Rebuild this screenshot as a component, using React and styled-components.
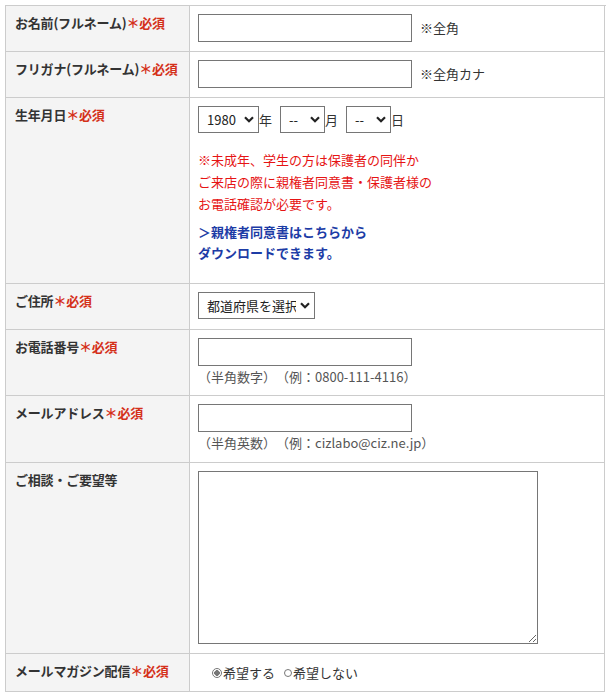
import React from "react";
import styled, { createGlobalStyle } from "styled-components";

const GlobalStyle = createGlobalStyle`
  body {
    margin: 0;
    background: #fff;
    font-family: "Noto Sans CJK JP", "Noto Sans", sans-serif;
    color: #333;
    text-spacing-trim: space-all;
  }
`;

const Page = styled.div`
  padding: 5px;
`;

const Table = styled.div`
  width: 600px;
  border-top: 1px solid #ccc;
  border-left: 1px solid #ccc;
  display: flex;
  flex-direction: column;
`;

const Row = styled.div`
  display: grid;
  grid-template-columns: 184px 415px;
  grid-template-rows: ${(p) => p.$h}px;
`;

const Head = styled.div`
  box-sizing: border-box;
  background: #f4f4f4;
  border-right: 1px solid #ccc;
  border-bottom: 1px solid #ccc;
  padding: 8px 4px 8px 9px;
  font-size: 13px;
  line-height: 18px;
  font-weight: 700;
  color: #333;
  white-space: nowrap;
  letter-spacing: -0.2px;
`;

const Required = styled.span`
  color: #d4301a;
`;

const Cell = styled.div`
  box-sizing: border-box;
  border-right: 1px solid #ccc;
  border-bottom: 1px solid #ccc;
  padding: 8px;
  font-size: 13px;
  line-height: 18px;
  display: flex;
  flex-direction: column;
  align-items: flex-start;
  justify-content: ${(p) => (p.$center ? "center" : "flex-start")};
`;

const Line = styled.div`
  display: flex;
  align-items: center;
`;

const TextInput = styled.input`
  box-sizing: border-box;
  width: 214px;
  height: 28px;
  border: 1px solid #767676;
  border-radius: 0;
  padding: 2px 4px;
  font: inherit;
  background: #fff;
`;

const Note = styled.span`
  margin-left: 8px;
  color: #333;
`;

const Hint = styled.div`
  margin-top: 2px;
  color: #555;
`;

const chevron =
  "url(\"data:image/svg+xml;utf8,<svg xmlns='http://www.w3.org/2000/svg' width='10' height='7' viewBox='0 0 10 7'><path d='M1 1.2 L5 5.2 L9 1.2' fill='none' stroke='%23222' stroke-width='2.2'/></svg>\")";

const Select = styled.select`
  box-sizing: border-box;
  appearance: none;
  width: ${(p) => p.$w}px;
  height: 27px;
  border: 1px solid #767676;
  border-radius: 0;
  padding: 0 18px 0 8px;
  font-family: "Noto Sans CJK JP", sans-serif;
  font-size: 13px;
  color: #222;
  background: #fff ${chevron} no-repeat right 4px center;
`;

const Unit = styled.span`
  margin-right: ${(p) => (p.$last ? 0 : 8)}px;
  color: #333;
`;

const Notice = styled.p`
  margin: 16px 0 0;
  color: #e61414;
  line-height: 22px;
`;

const Link = styled.a`
  display: block;
  margin-top: 6px;
  color: #1d3ca6;
  font-weight: 700;
  line-height: 21px;
  text-decoration: none;
`;

const TextArea = styled.textarea`
  box-sizing: border-box;
  width: 340px;
  height: 173px;
  border: 1px solid #767676;
  border-radius: 0;
  font: inherit;
`;

const RadioGroup = styled.div`
  display: flex;
  align-items: center;
  padding-left: 13px;
  color: #333;
`;

const RadioLabel = styled.label`
  display: flex;
  align-items: center;
  margin-right: 8px;
`;

const Dot = styled.span`
  box-sizing: border-box;
  width: ${(p) => (p.$on ? 10 : 8)}px;
  height: ${(p) => (p.$on ? 10 : 8)}px;
  margin: 0 1px;
  border-radius: 50%;
  border: 1px solid #777;
  background: ${(p) => (p.$on ? "radial-gradient(circle, #777 0 2.6px, #fff 3px)" : "#fff")};
`;

const Label = ({ text, req }) => (
  <Head>
    {text}
    {req && <Required>＊必須</Required>}
  </Head>
);

export default function App() {
  return (
    <Page>
      <GlobalStyle />
      <Table>
        <Row $h={46}>
          <Label text="お名前(フルネーム)" req />
          <Cell>
            <Line>
              <TextInput />
              <Note>※全角</Note>
            </Line>
          </Cell>
        </Row>
        <Row $h={46}>
          <Label text="フリガナ(フルネーム)" req />
          <Cell>
            <Line>
              <TextInput />
              <Note>※全角カナ</Note>
            </Line>
          </Cell>
        </Row>
        <Row $h={186}>
          <Label text="生年月日" req />
          <Cell>
            <Line>
              <Select $w={61} defaultValue="1980">
                <option>1980</option>
              </Select>
              <Unit>年</Unit>
              <Select $w={45}>
                <option>--</option>
              </Select>
              <Unit>月</Unit>
              <Select $w={45}>
                <option>--</option>
              </Select>
              <Unit $last>日</Unit>
            </Line>
            <Notice>
              ※未成年、学生の方は保護者の同伴か
              <br />
              ご来店の際に親権者同意書・保護者様の
              <br />
              お電話確認が必要です。
            </Notice>
            <Link href="#">
              ＞親権者同意書はこちらから
              <br />
              ダウンロードできます。
            </Link>
          </Cell>
        </Row>
        <Row $h={46}>
          <Label text="ご住所" req />
          <Cell>
            <Select $w={117}>
              <option>都道府県を選択</option>
            </Select>
          </Cell>
        </Row>
        <Row $h={66}>
          <Label text="お電話番号" req />
          <Cell>
            <TextInput />
            <Hint>（半角数字）（例：0800-111-4116）</Hint>
          </Cell>
        </Row>
        <Row $h={67}>
          <Label text="メールアドレス" req />
          <Cell>
            <TextInput />
            <Hint>（半角英数）（例：cizlabo@ciz.ne.jp）</Hint>
          </Cell>
        </Row>
        <Row $h={191}>
          <Label text="ご相談・ご要望等" />
          <Cell>
            <TextArea />
          </Cell>
        </Row>
        <Row $h={38}>
          <Label text="メールマガジン配信" req />
          <Cell $center>
            <RadioGroup>
              <RadioLabel>
                <Dot $on />
                希望する
              </RadioLabel>
              <RadioLabel>
                <Dot />
                希望しない
              </RadioLabel>
            </RadioGroup>
          </Cell>
        </Row>
      </Table>
    </Page>
  );
}
